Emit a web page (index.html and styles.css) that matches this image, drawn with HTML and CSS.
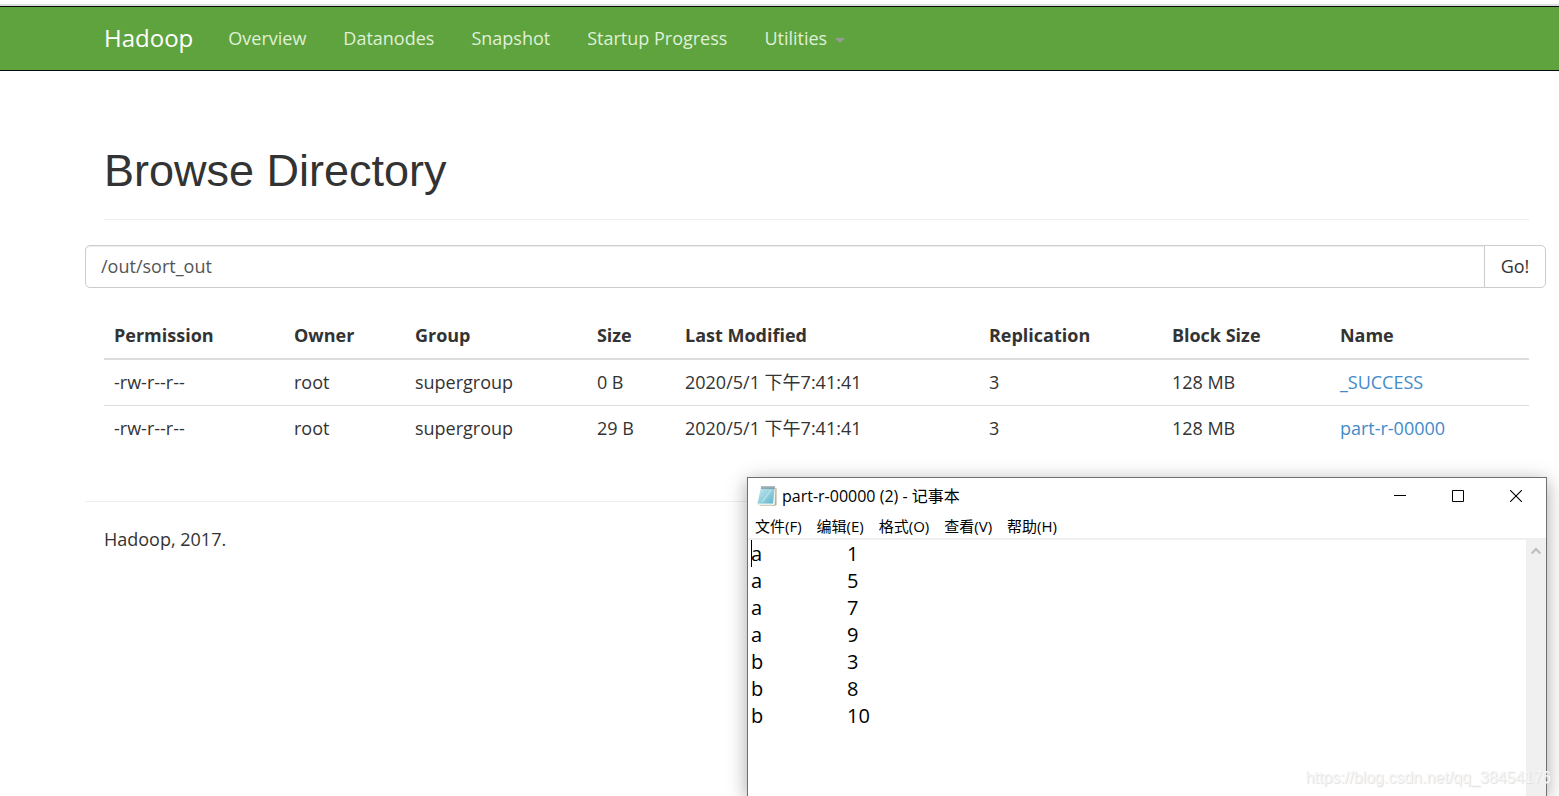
FILE: index.html
```html
<!DOCTYPE html>
<html lang="en">
<head>
<meta charset="utf-8">
<title>Browsing HDFS</title>
<link rel="stylesheet" href="styles.css">
</head>
<body>
<header class="navbar">
  <a class="brand" href="#">Hadoop</a>
  <nav class="nav">
    <a href="#">Overview</a>
    <a href="#">Datanodes</a>
    <a href="#">Snapshot</a>
    <a href="#">Startup Progress</a>
    <a href="#">Utilities<span class="caret"></span></a>
  </nav>
</header>

<main class="container">
  <div class="page-header"><h1>Browse Directory</h1></div>
  <form class="path-form">
    <input class="path" type="text" value="/out/sort_out" aria-label="Directory path">
    <button class="go" type="button">Go!</button>
  </form>
  <div class="listing">
    <table>
      <colgroup>
        <col class="c-perm"><col class="c-owner"><col class="c-group"><col class="c-size">
        <col class="c-mod"><col class="c-repl"><col class="c-block"><col class="c-name">
      </colgroup>
      <thead>
        <tr><th>Permission</th><th>Owner</th><th>Group</th><th>Size</th><th>Last Modified</th><th>Replication</th><th>Block Size</th><th>Name</th></tr>
      </thead>
      <tbody>
        <tr><td>-rw-r--r--</td><td>root</td><td>supergroup</td><td>0 B</td><td>2020/5/1 下午7:41:41</td><td>3</td><td>128 MB</td><td><a href="#">_SUCCESS</a></td></tr>
        <tr><td>-rw-r--r--</td><td>root</td><td>supergroup</td><td>29 B</td><td>2020/5/1 下午7:41:41</td><td>3</td><td>128 MB</td><td><a href="#">part-r-00000</a></td></tr>
      </tbody>
    </table>
  </div>
  <footer class="footer">Hadoop, 2017.</footer>
</main>

<section class="notepad" aria-label="Notepad">
  <div class="titlebar">
    <svg class="app-icon" width="20" height="22" viewBox="0 0 20 22" aria-hidden="true">
      <defs><linearGradient id="page" x1="0" y1="0" x2="1" y2="1"><stop offset="0" stop-color="#c9ebf2"/><stop offset="1" stop-color="#5eb4c9"/></linearGradient></defs>
      <path d="M5 3H19.500V20L17 21H3Z" fill="#b9a583"/>
      <path d="M4 2H18.500L18 19.500L16 20.500H1L.5 19Z" fill="#e9f0f0"/>
      <path d="M4 2.500H17.500L16 18.500H.5Z" fill="url(#page)"/>
      <path d="M14 5L5 17" stroke="#dff4f7" stroke-width="2" opacity=".4"/>
      <path d="M5 1V4M7 1V4M9 1V4M11 1V4M13 1V4M15 1V4M17 1V4" stroke="#69757a" stroke-width="1"/>
    </svg>
    <span class="title">part-r-00000 (2) - 记事本</span>
    <div class="controls">
      <button type="button" aria-label="Minimize"><svg width="12" height="12" viewBox="0 0 12 12"><path d="M0 5.500H12" stroke="#000"/></svg></button>
      <button type="button" aria-label="Maximize"><svg width="12" height="12" viewBox="0 0 12 12"><path d="M.5 .5H11.500V11.500H.5Z" fill="none" stroke="#000"/></svg></button>
      <button type="button" aria-label="Close"><svg width="12" height="12" viewBox="0 0 12 12"><path d="M0 0L12 12M12 0L0 12" stroke="#000" stroke-width="1.100"/></svg></button>
    </div>
  </div>
  <div class="menubar">
    <button type="button">文件(F)</button>
    <button type="button">编辑(E)</button>
    <button type="button">格式(O)</button>
    <button type="button">查看(V)</button>
    <button type="button">帮助(H)</button>
  </div>
  <div class="editor">
    <textarea class="text" aria-label="File content" spellcheck="false">a&#9;1
a&#9;5
a&#9;7
a&#9;9
b&#9;3
b&#9;8
b&#9;10</textarea>
    <span class="cursor"></span>
    <div class="scrollbar"><svg width="10" height="8" viewBox="0 0 10 8"><path d="M.7 6.500L5 2L9.300 6.500" fill="none" stroke="#bcbcbc" stroke-width="2"/></svg></div>
  </div>
</section>
<div class="watermark">https://blog.csdn.net/qq_38454176</div>
</body>
</html>
```
FILE: styles.css
```css
* { box-sizing: border-box; }

body {
  position: relative;
  min-height: 100vh;
  margin: 0;
  padding-top: 4px;
  overflow: hidden;
  background: #fff;
  color: #333;
  font: 18px/26px "Open Sans", "Noto Sans CJK SC", sans-serif;
}

a { color: #428bca; text-decoration: none; }
button, input, textarea { font: inherit; color: inherit; }

.navbar {
  display: flex;
  align-items: center;
  height: 67px;
  padding: 0 104px;
  border-top: 2px solid #dcdfe0;
  border-bottom: 1px solid #080808;
  background: #5fa33e;
  box-shadow: inset 0 1px #080808;
}
.brand { margin-right: 35px; color: #fff; font-size: 24px; }
.nav { display: flex; gap: 37px; }
.nav a { color: #dff0d8; }
.caret {
  display: inline-block;
  margin-left: 8px;
  vertical-align: middle;
  border: 5px solid transparent;
  border-top-color: #999;
  border-bottom: 0;
}

.container { margin: 0 13px 0 85px; padding-top: 69px; }
.page-header {
  margin: 0 17px 25px 19px;
  padding-bottom: 17px;
  border-bottom: 1px solid #eee;
}
h1 {
  margin: 0;
  font: 45px/62px "Liberation Sans", Arial, sans-serif;
}

.path-form { display: flex; height: 43px; }
.path {
  flex: 1;
  min-width: 0;
  padding: 0 15px 2px;
  border: 1px solid #ccc;
  border-radius: 5px 0 0 5px;
  background: #fff;
  box-shadow: inset 0 1px 1px rgba(0, 0, 0, .075);
  color: #555;
}
.go {
  width: 62px;
  margin-left: -1px;
  padding: 0 0 2px;
  border: 1px solid #ccc;
  border-radius: 0 5px 5px 0;
  background: #fff;
}

.listing { margin: 25px 17px 50px 19px; }
table { width: 100%; border-collapse: collapse; table-layout: fixed; }
th, td { padding: 10px; text-align: left; white-space: nowrap; line-height: 25px; }
th { border-bottom: 2px solid #ddd; font-weight: 700; }
tbody tr + tr td { border-top: 1px solid #ddd; }
.c-perm { width: 12.63%; }
.c-owner { width: 8.49%; }
.c-group { width: 12.77%; }
.c-size { width: 6.18%; }
.c-mod { width: 21.33%; }
.c-repl { width: 12.84%; }
.c-block { width: 11.79%; }

.footer { padding: 24px 19px; border-top: 1px solid #eee; }

.notepad {
  position: absolute;
  top: 477px;
  right: 12px;
  bottom: 0;
  width: 800px;
  display: flex;
  flex-direction: column;
  border: 1px solid #707070;
  border-bottom: 0;
  background: #fff;
  box-shadow: 0 4px 18px rgba(0, 0, 0, .35);
  color: #000;
  font-size: 15px;
}
.titlebar { display: flex; align-items: center; height: 36px; padding: 0 1px 0 9px; }
.title { margin-left: 5px; font-size: 16px; }
.controls { display: flex; margin-left: auto; }
.controls button {
  display: grid;
  place-items: center;
  width: 58px;
  height: 36px;
  padding: 0;
  border: 0;
  background: none;
}
.menubar {
  display: flex;
  gap: 15px;
  height: 26px;
  padding: 0 7px;
  border-bottom: 2px solid #f0f0f0;
}
.menubar button { padding: 0; border: 0; background: none; font-size: 15px; line-height: 24px; }
.editor { position: relative; display: flex; flex: 1; min-height: 0; }
.text {
  flex: 1;
  padding: 0 3px;
  border: 0;
  outline: 0;
  resize: none;
  overflow: hidden;
  background: #fff;
  font-size: 20px;
  line-height: 27px;
  tab-size: 96px;
}
.cursor { position: absolute; top: 0; left: 3px; width: 1px; height: 27px; background: #000; }
.scrollbar { width: 20px; padding-top: 5px; background: #f0f0f0; text-align: center; line-height: 8px; }

.watermark {
  position: absolute;
  right: 8px;
  bottom: 6px;
  color: #f6f6f6;
  font: 16px/24px "Liberation Sans", Arial, sans-serif;
  text-shadow: 1px 1px 1px #ddd;
}
```
